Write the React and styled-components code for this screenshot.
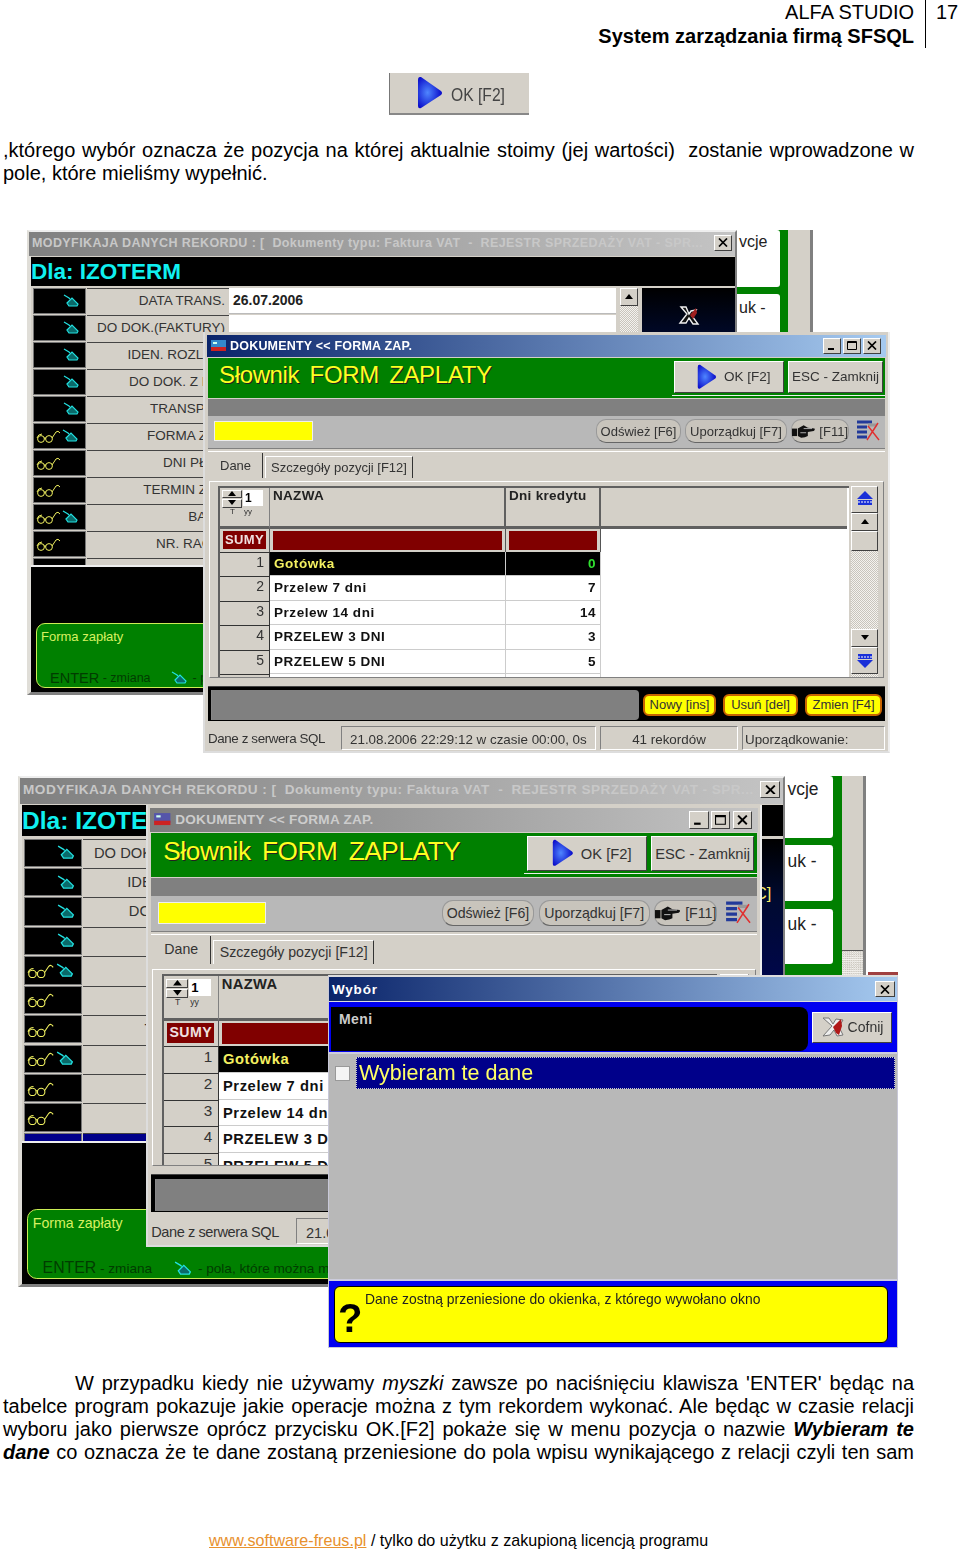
import React from "react";
import styled, { createGlobalStyle, css } from "styled-components";

const GlobalStyle = createGlobalStyle`
  html, body { margin: 0; padding: 0; background: #fff; }
  body { font-family: "Liberation Sans", Arial, sans-serif; color: #000; }
`;

const raised = css`
  border: 1px solid;
  border-color: #fff #404040 #404040 #fff;
  box-sizing: border-box;
`;

const sunken = css`
  border: 1px solid;
  border-color: #808080 #fff #fff #808080;
  box-sizing: border-box;
`;

const dither = css`
  background: repeating-conic-gradient(#c8c4bc 0 25%, #f4f2ee 0 50%) 0 0 / 2px 2px;
`;

const Page = styled.div`
  width: 960px;
  height: 1550px;
  overflow: hidden;
  display: flex;
  flex-direction: column;
`;

const Header = styled.header`
  display: flex;
  justify-content: flex-end;
  height: 48px;
  font-size: 20px;
  line-height: 24px;
`;
const HeaderTitles = styled.div`
  text-align: right;
  padding: 0 11px 0 0;
  border-right: 1px solid #000;
  strong { display: block; }
`;
const PageNumber = styled.div`
  width: 34px;
  padding-left: 10px;
  box-sizing: border-box;
`;

const OkPicture = styled.div`
  margin: 25px 0 0 389px;
  width: 140px;
  height: 42px;
  background: #d4d0c8;
  border-left: 1px solid #777;
  border-bottom: 2px solid #888;
  box-sizing: border-box;
  display: flex;
  align-items: center;
  padding-left: 27px;
  gap: 8px;
  font-size: 18px;
  color: #444;
  filter: blur(0.4px);
  span { display: inline-block; margin-top: 5px; transform: scaleX(0.87); transform-origin: left; }
`;

const Para = styled.p`
  margin: ${(p) => p.$top}px 0 0 3px;
  width: 911px;
  font-size: 20px;
  line-height: 23.3px;
  text-align: justify;
  text-align-last: ${(p) => (p.$fill ? "justify" : "left")};
  text-indent: ${(p) => p.$indent || 0}px;
`;

const Footer = styled.footer`
  margin-top: 65px;
  margin-left: 209px;
  font-size: 16.1px;
  line-height: 20px;
  white-space: nowrap;
  a { color: #e8912d; }
`;

const Shot = styled.div`
  position: relative;
  margin-top: ${(p) => p.$top}px;
  height: ${(p) => p.$height}px;
  flex: none;
  filter: blur(0.4px);
`;

const Placed = styled.div`
  position: absolute;
  left: ${(p) => p.$x / (p.$scale || 1)}px;
  top: ${(p) => p.$y / (p.$scale || 1)}px;
  width: ${(p) => p.$w}px;
  height: ${(p) => p.$h}px;
  zoom: ${(p) => p.$scale || 1};
`;

/* ---------- icons ---------- */

const MouseIcon = () => (
  <svg width="18" height="14" viewBox="0 0 18 14" fill="none" stroke="#22e0e0" strokeWidth="1.2">
    <path d="M1 1l5 3 1 1" />
    <path d="M4 9l5-5 6 6-1 2H6z" fill="#0a6a6a" />
  </svg>
);

const GlassesIcon = () => (
  <svg width="25" height="14" viewBox="0 0 25 14" fill="none" stroke="#f0f060" strokeWidth="1">
    <circle cx="5" cy="10" r="3.4" />
    <circle cx="13" cy="10" r="3.4" />
    <path d="M1 9q1-4 5-4M8 9h2M16 9l4-6q2-2 4 1" />
  </svg>
);

const PlayIcon = ({ size = 34 }) => (
  <svg width={(size * 26) / 34} height={size} viewBox="0 0 26 34">
    <defs>
      <radialGradient id="playFill" cx="0.4" cy="0.5" r="0.6">
        <stop offset="0" stopColor="#4f86ff" />
        <stop offset="1" stopColor="#0808c8" />
      </radialGradient>
    </defs>
    <path d="M3 1Q1 1 1 4V30Q1 33 4 32L24 19Q26 17 24 15L4 1Z" fill="url(#playFill)" />
  </svg>
);

const CloseGlyph = () => (
  <svg width="10" height="9" viewBox="0 0 10 9" stroke="#000" strokeWidth="1.7">
    <path d="M1 0.5l8 8M9 0.5l-8 8" />
  </svg>
);
const MinGlyph = () => (
  <svg width="10" height="9" viewBox="0 0 10 9">
    <rect x="1" y="7" width="6" height="2" fill="#000" />
  </svg>
);
const MaxGlyph = () => (
  <svg width="10" height="9" viewBox="0 0 10 9" fill="none" stroke="#000">
    <path d="M0.5 0.5h9v8h-9zM0.5 1.5h9" />
  </svg>
);

const AppIcon = ({ dim }) => (
  <svg width="17" height="14" viewBox="0 0 17 14">
    <rect x="1" y="1" width="15" height="9" fill={dim ? "#55a" : "#38c"} />
    <rect x="3" y="3" width="4" height="2" fill="#cfe" />
    <rect x="1" y="8" width="15" height="4" fill="#c22" />
  </svg>
);

const HandIcon = () => (
  <svg width="28" height="17" viewBox="0 0 28 17">
    <path d="M0 5h6v9H0z" fill="#111" />
    <path d="M7 5l7-4 5 3 8 1q1 2-1 3l-7 1v5q-3 2-8 2l-4-2z" fill="#111" />
    <path d="M14 5h10M10 10h7" stroke="#ccc" />
  </svg>
);

const ColumnsIcon = () => (
  <svg width="24" height="22" viewBox="0 0 24 22">
    <path d="M1 2h15M1 7h10M1 12h10M1 17h10" stroke="#223a9a" strokeWidth="3" />
    <path d="M12 5h9" stroke="#999" strokeWidth="3" />
    <path d="M11 20L22 3M12 6l11 14" stroke="#e03030" strokeWidth="1.4" fill="none" />
  </svg>
);

const BackIcon = () => (
  <svg width="24" height="21" viewBox="0 0 24 21">
    <path d="M2 1l9 8-9 10 7-1 4-5 3 6 6-1-4-8 4-7-7-1-3 5-4-6z" fill="#eee" stroke="#777" />
    <path d="M12 10l8-8 1 7-3 9-3-2z" fill="#b01818" />
  </svg>
);

const WrongIcon = () => (
  <svg width="24" height="22" viewBox="0 0 24 22" fill="none">
    <path d="M4 2l6 7-7 9h6l3-5 4 6h5l-6-8 4-6-5 1-2 3-3-7z" stroke="#f0f0f0" strokeWidth="1.4" fill="#111" />
    <path d="M13 10l6-7 1 5-4 6z" fill="#a02020" />
  </svg>
);

const Triangle = ({ down }) => (
  <svg width="10" height="6" viewBox="0 0 10 6">
    <path d={down ? "M1 0h8l-4 5z" : "M5 0l4 5H1z"} fill="#000" />
  </svg>
);

const JumpIcon = ({ down }) => (
  <svg width="20" height="18" viewBox="0 0 20 18" style={down ? { transform: "scaleY(-1)" } : undefined}>
    <path d="M10 1l8 8H2z" fill="#1a30d8" />
    <rect x="3" y="10" width="14" height="5" fill="#1a30d8" />
    <path d="M3 12h14" stroke="#fff" strokeDasharray="2 1" />
  </svg>
);

/* ---------- window behind ---------- */

const RecordFrame = styled.div`
  display: flex;
  height: 100%;
`;
const RecordMain = styled.div`
  flex: 1;
  min-width: 0;
  display: flex;
  flex-direction: column;
  background: #d4d0c8;
  border-top: 2px solid #eee;
  border-bottom: 3px solid #808080;
  border-left: 4px solid #e0ded8;
  border-right: 2px solid #808080;
  box-sizing: border-box;
`;
const RecordTitle = styled.div`
  height: 24px;
  flex: none;
  display: flex;
  align-items: center;
  justify-content: space-between;
  padding: 0 3px 2px 3px;
  margin-left: -2px;
  background: linear-gradient(90deg, #808080, #c4c4c4);
  color: #c8c8c8;
  font-size: 12.5px;
  font-weight: bold;
  white-space: pre;
  overflow: hidden;
  letter-spacing: 0.4px;
  margin-bottom: 1px;
  box-sizing: border-box;
`;
const CaptionButton = styled.span`
  ${raised}
  flex: none;
  width: ${(p) => p.$w || 18}px;
  height: 16px;
  background: #d4d0c8;
  display: inline-flex;
  align-items: center;
  justify-content: center;
`;
const ClientBand = styled.div`
  height: 29px;
  flex: none;
  background: #000;
  color: #10f0f0;
  font-size: 22.5px;
  font-weight: bold;
  line-height: 29px;
`;
const RecordBody = styled.div`
  height: 281px;
  flex: none;
  display: flex;
  gap: 4px;
  overflow: hidden;
  padding: 2px 0 0 2px;
  border-bottom: 2px solid #eee;
  box-sizing: border-box;
`;
const FieldList = styled.div`
  flex: 1;
  min-width: 0;
  display: flex;
  flex-direction: column;
  overflow: hidden;
`;
const FieldRow = styled.div`
  display: flex;
  height: 27px;
  flex: none;
  box-sizing: border-box;
  padding-bottom: 1px;
`;
const FieldIcons = styled.div`
  width: 53px;
  flex: none;
  box-sizing: border-box;
  background: ${(p) => (p.$navy ? "#00008a" : "#000")};
  border: 1px solid #777;
  display: flex;
  align-items: center;
  justify-content: ${(p) => (p.$end ? "flex-end" : "flex-start")};
  gap: 1px;
  padding: 0 4px 0 2px;
`;
const FieldLabel = styled.div`
  width: 142px;
  flex: none;
  box-sizing: border-box;
  margin-left: 1px;
  background: ${(p) => (p.$navy ? "#00008a" : "#d4d0c8")};
  color: ${(p) => (p.$navy ? "#ffff60" : "#333")};
  border-top: 1px solid #444;
  text-align: right;
  padding-right: 4px;
  font-size: 13.5px;
  line-height: 24px;
  white-space: nowrap;
  overflow: hidden;
`;
const FieldValue = styled.div`
  flex: 1;
  background: #fff;
  border-bottom: 1px solid #bbb;
  font-size: 14px;
  font-weight: bold;
  line-height: 24px;
  padding-left: 4px;
  color: #222;
`;
const FieldScroll = styled.div`
  width: 18px;
  flex: none;
  ${dither}
`;
const ScrollButton = styled.div`
  ${raised}
  height: 18px;
  background: #d4d0c8;
  display: flex;
  align-items: center;
  justify-content: center;
`;
const SidePanel = styled.div`
  width: 93px;
  flex: none;
  background: linear-gradient(180deg, #000 0%, #000a30 20%, #000080 100%);
  color: #ffee66;
  font-size: 15px;
  display: flex;
  flex-direction: column;
  align-items: center;
  padding-top: 17px;
  box-sizing: border-box;
`;
const PanelHint = styled.span`
  margin-top: 3px;
  align-self: flex-end;
  margin-right: 11px;
`;
const RecordFooter = styled.div`
  flex: 1;
  background: #000;
  padding: 0 6px 4px 5px;
  display: flex;
  align-items: flex-end;
`;
const HintBox = styled.div`
  flex: 1;
  height: 65px;
  box-sizing: border-box;
  background: #008000;
  border: 1px solid #ccee55;
  border-radius: 9px;
  padding: 5px 4px 0;
  display: flex;
  flex-direction: column;
  justify-content: space-between;
  color: #d8f060;
  font-size: 13px;
  white-space: nowrap;
  overflow: hidden;
`;
const HintKeys = styled.div`
  display: flex;
  align-items: center;
  color: #003c00;
  font-size: 12.5px;
  padding-left: 9px;
  margin-bottom: 1px;
  b { font-weight: normal; font-size: 14.5px; }
  svg { margin: 0 4px 0 20px; }
`;

const SideStrip = styled.div`
  width: ${(p) => p.$w}px;
  flex: none;
  display: flex;
  overflow: hidden;
`;
const SideCells = styled.div`
  flex: 1;
  display: flex;
  flex-direction: column;
  background: #008000;
  gap: 7px;
  padding-right: 8px;
  min-width: 0;
`;
const SideCell = styled.div`
  height: 51px;
  flex: none;
  background: #fff;
  border-radius: 0 3px 3px 0;
  font-size: 16px;
  line-height: 24px;
  color: #222;
  padding: 2px 0 0 2px;
  box-sizing: border-box;
  white-space: nowrap;
  &:first-child {
    height: 57px;
    padding-top: 0;
  }
`;
const SideScroll = styled.div`
  width: ${(p) => p.$w}px;
  flex: none;
  ${dither}
  border-right: 3px solid #808080;
  box-sizing: border-box;
`;
const SideThumb = styled.div`
  height: 160px;
  background: #d4d0c8;
  border-bottom: 1px solid #555;
`;

/* ---------- dictionary window ---------- */

const FormFrame = styled.div`
  height: 100%;
  display: flex;
  flex-direction: column;
  box-sizing: border-box;
  background: #d4d0c8;
  padding: 3px 3px 1px;
  border-right: 2px solid #eee;
  border-left: 2px solid #ddd;
  border-bottom: 2px solid #ddd;
`;
const FormTitle = styled.div`
  height: 22px;
  flex: none;
  margin: 0 -1px 1px;
  padding: 0 3px;
  display: flex;
  align-items: center;
  gap: 3px;
  background: ${(p) =>
    p.$active ? "linear-gradient(90deg, #0a246a, #a6caf0)" : "linear-gradient(90deg, #7c7c7c, #c4c4c4)"};
  color: ${(p) => (p.$active ? "#fff" : "#ccc")};
  font-size: 12.5px;
  font-weight: bold;
  letter-spacing: 0.2px;
  white-space: nowrap;
`;
const TitleSpacer = styled.span`
  flex: 1;
`;
const CaptionGroup = styled.span`
  display: inline-flex;
  gap: 2px;
  margin-right: 2px;
`;
const GreenBand = styled.div`
  height: 40px;
  flex: none;
  background: #008000;
  display: flex;
  align-items: flex-start;
`;
const DictTitle = styled.div`
  flex: 1;
  padding: 2px 0 0 11px;
  color: #ffff20;
  font-size: 24px;
  line-height: 30px;
  word-spacing: 4px;
  letter-spacing: -0.35px;
  text-shadow: 1px 1px 0 #222;
  white-space: nowrap;
`;
const BandButtons = styled.div`
  display: flex;
  gap: 4px;
  background: #008000;
  height: 38px;
  padding: 3px 2px 2px;
  box-sizing: border-box;
  border-bottom: 1px solid #eee;
`;
const BandButton = styled.div`
  ${raised}
  width: ${(p) => p.$w}px;
  background: #d4d0c8;
  display: flex;
  align-items: center;
  justify-content: ${(p) => (p.$lead ? "flex-start" : "center")};
  padding-left: ${(p) => p.$lead || 0}px;
  gap: 7px;
  color: #333;
  font-size: 13.5px;
  white-space: nowrap;
`;
const GreyBand = styled.div`
  height: 17px;
  flex: none;
  background: #808080;
  margin-top: 1px;
`;
const FilterBar = styled.div`
  height: 33px;
  flex: none;
  background: #b8b8b8;
  border-bottom: 1px solid #808080;
  box-sizing: border-box;
  display: flex;
  align-items: center;
  gap: 4px;
  padding: 0 5px 1px 6px;
`;
const SearchBox = styled.div`
  width: 99px;
  height: 20px;
  background: #ffff00;
  border: 1px solid #eee;
  box-sizing: border-box;
  margin-right: auto;
`;
const PillButton = styled.div`
  width: ${(p) => p.$w}px;
  height: 24px;
  box-sizing: border-box;
  display: flex;
  align-items: center;
  justify-content: center;
  gap: 4px;
  border: 1px solid #999;
  border-bottom-color: #666;
  border-radius: 10px;
  background: #c8c4bc;
  color: #333;
  font-size: 13px;
  white-space: nowrap;
`;
const ColumnsSlot = styled.span`
  display: inline-flex;
  margin-left: 3px;
`;
const TabsBar = styled.div`
  height: 27px;
  flex: none;
  margin-top: 2px;
  border-top: 1px solid #fff;
  box-sizing: border-box;
  display: flex;
  align-items: flex-end;
  gap: 2px;
  padding-left: 6px;
`;
const Tab = styled.div`
  height: ${(p) => (p.$on ? 25 : 22)}px;
  box-sizing: border-box;
  padding: 0 ${(p) => (p.$on ? 11 : 5)}px 0 ${(p) => (p.$on ? 6 : 5)}px;
  border-right: 1px solid #333;
  border-left: ${(p) => (p.$on ? "0" : "1px solid #fff")};
  border-top: ${(p) => (p.$on ? "0" : "1px solid #fff")};
  font-size: 13px;
  line-height: ${(p) => (p.$on ? 25 : 22)}px;
  color: #333;
  white-space: nowrap;
`;
const GridArea = styled.div`
  flex: 1;
  min-height: 0;
  display: flex;
  gap: 2px;
  margin: ${(p) => p.$top}px 1px 0;
  padding: 4px 5px 0 8px;
  border-top: 1px solid #fff;
  border-bottom: 1px solid #808080;
  border-right: 1px solid #808080;
  border-left: 1px solid #fff;
  box-sizing: border-box;
`;
const GridBody = styled.div`
  flex: 1;
  min-width: 0;
  overflow: hidden;
  background: #fff;
  border-left: 2px solid #606060;
  border-top: 2px solid #606060;
  padding-right: 2px;
  box-sizing: border-box;
`;
const GridRow = styled.div`
  display: grid;
  grid-template-columns: 50px 236px 95px 1fr;
  height: ${(p) => p.$h}px;
  box-sizing: border-box;
`;
const CornerCell = styled.div`
  background: #d4d0c8;
  border-right: 1px solid #808080;
  border-bottom: 3px solid #606060;
  font-size: 12px;
  font-weight: bold;
  padding: 2px 0 0 2px;
  box-sizing: border-box;
`;
const SpinnerRow = styled.div`
  display: flex;
  gap: 1px;
`;
const Spinner = styled.div`
  display: flex;
  flex-direction: column;
  width: 20px;
  height: 18px;
  gap: 1px;
  span {
    flex: 1;
    ${raised}
    background: #d4d0c8;
    display: flex;
    align-items: center;
    justify-content: center;
  }
`;
const SpinnerValue = styled.div`
  width: 20px;
  height: 16px;
  background: #fff;
  line-height: 17px;
  padding-left: 2px;
  box-sizing: border-box;
`;
const SpinnerUnits = styled.div`
  font-size: 8px;
  font-weight: normal;
  line-height: 8px;
  padding-left: 8px;
  word-spacing: 7px;
  color: #333;
`;
const HeadCell = styled.div`
  background: #d4d0c8;
  border-right: 2px solid #606060;
  border-bottom: 3px solid #606060;
  font-size: 13.5px;
  font-weight: bold;
  letter-spacing: 0.3px;
  color: #222;
  padding: 0 3px;
  box-sizing: border-box;
`;
const HeadFill = styled(HeadCell)`
  border-right: 0;
`;
const SumLabel = styled.div`
  background: #d4d0c8;
  padding: 2px 3px 0;
  box-sizing: border-box;
  border-right: 1px solid #555;
  span {
    display: block;
    background: #800000;
    color: #f0e0e0;
    font-size: 13px;
    font-weight: bold;
    letter-spacing: 0.4px;
    line-height: 18px;
    text-align: center;
    white-space: nowrap;
    overflow: hidden;
  }
`;
const SumCell = styled.div`
  background: #d4d0c8;
  border-right: 1px solid #555;
  padding: 2px 3px;
  box-sizing: border-box;
  span {
    display: block;
    height: 100%;
    background: #800000;
  }
`;
const RowNumber = styled.div`
  background: #d4d0c8;
  border-top: 1px solid #333;
  border-right: 1px solid #333;
  text-align: right;
  padding-right: 5px;
  font-size: 14px;
  line-height: 19px;
  color: #333;
  box-sizing: border-box;
`;
const DataCell = styled.div`
  background: ${(p) => (p.$on ? "#000" : "#fff")};
  color: ${(p) => (p.$on ? p.$on : "#111")};
  border-bottom: 1px solid #ccc;
  border-right: 1px solid #ccc;
  font-size: 13.5px;
  font-weight: bold;
  letter-spacing: 0.55px;
  line-height: 24px;
  padding: 0 4px;
  text-align: ${(p) => (p.$num ? "right" : "left")};
  white-space: nowrap;
  overflow: hidden;
  box-sizing: border-box;
`;
const BlankCell = styled.div`
  background: #fff;
`;
const ScrollColumn = styled.div`
  width: 27px;
  flex: none;
  display: flex;
  flex-direction: column;
  padding-bottom: 3px;
  box-sizing: border-box;
  ${dither}
`;
const ScrollJump = styled(ScrollButton)`
  height: 27px;
`;
const ScrollThumb = styled(ScrollButton)`
  height: 20px;
`;
const ScrollGap = styled.div`
  flex: 1;
`;
const ActionBar = styled.div`
  height: 35px;
  flex: none;
  margin-top: 8px;
  padding: 3px 3px 1px;
  background: #000;
  box-sizing: border-box;
  display: flex;
  align-items: center;
  gap: 7px;
  border-top: 1px solid #444;
`;
const MessagePanel = styled.div`
  flex: 1;
  align-self: stretch;
  background: #808080;
  border-radius: 0 4px 4px 0;
  border-left: 1px solid #888;
  margin-right: -3px;
`;
const YellowButton = styled.div`
  width: ${(p) => p.$w}px;
  height: 22px;
  box-sizing: border-box;
  background: #ffff00;
  border: 2px solid #c86400;
  border-radius: 6px;
  text-align: center;
  color: #333;
  font-size: 13px;
  line-height: 17px;
  white-space: nowrap;
`;
const StatusBar = styled.div`
  height: 24px;
  flex: none;
  margin-top: 5px;
  display: flex;
  gap: 4px;
  font-size: 13.4px;
  color: #333;
  line-height: 26px;
  white-space: nowrap;
  overflow: hidden;
`;
const StatusCell = styled.div`
  ${(p) => p.$sunken && sunken}
  flex: ${(p) => (p.$w ? "none" : 1)};
  width: ${(p) => p.$w}px;
  padding: 0 ${(p) => (p.$center ? 0 : 3)}px 0 ${(p) => p.$pad || 0}px;
  text-align: ${(p) => (p.$center ? "center" : "left")};
  letter-spacing: ${(p) => (p.$tight ? "-0.4px" : "normal")};
  overflow: hidden;
`;

/* ---------- choice dialog ---------- */

const Dialog = styled.div`
  height: 100%;
  display: flex;
  flex-direction: column;
  background: #0000f0;
  border: 1px solid #c8c8d8;
  border-top: 2px solid #ddd;
  box-sizing: border-box;
`;
const DialogTitle = styled.div`
  height: 23px;
  flex: none;
  background: linear-gradient(90deg, #0a246a, #a6caf0);
  color: #fff;
  font-size: 13.5px;
  font-weight: bold;
  letter-spacing: 0.8px;
  display: flex;
  align-items: center;
  justify-content: space-between;
  padding: 1px 2px 0 3px;
  border-bottom: 1px solid #ddd;
`;
const DialogTop = styled.div`
  height: 50px;
  flex: none;
  display: flex;
  align-items: flex-start;
  padding-top: 5px;
  box-sizing: border-box;
`;
const MenuTitle = styled.div`
  width: 477px;
  height: 44px;
  margin-left: 2px;
  box-sizing: border-box;
  background: #000;
  border-radius: 0 8px 8px 0;
  color: #ccc;
  font-size: 14px;
  font-weight: bold;
  padding: 4px 8px;
  letter-spacing: 0.4px;
`;
const BackButton = styled.div`
  ${raised}
  width: 80px;
  height: 31px;
  margin: 5px 0 0 4px;
  background: #d4d0c8;
  display: flex;
  align-items: center;
  justify-content: center;
  gap: 3px;
  font-size: 14px;
  color: #333;
`;
const ChoiceList = styled.div`
  flex: 1;
  background: #b8b8b8;
  border-top: 2px solid #ccd;
  border-bottom: 2px solid #ccd;
  padding: 3px 2px 0 6px;
  display: flex;
  align-items: flex-start;
  gap: 6px;
`;
const ChoiceBox = styled.span`
  width: 15px;
  height: 15px;
  flex: none;
  margin-top: 9px;
  background: #f4f4f4;
  border: 1px solid #999;
  box-sizing: border-box;
`;
const ChoiceRow = styled.div`
  flex: 1;
  height: 32px;
  box-sizing: border-box;
  background: #00008a;
  border: 1px dotted #ccc;
  color: #ffff66;
  font-size: 21.5px;
  line-height: 30px;
  padding-left: 2px;
`;
const DialogHint = styled.div`
  height: 66px;
  flex: none;
  padding: 5px 9px 4px 5px;
  box-sizing: border-box;
  display: flex;
`;
const HintYellow = styled.div`
  flex: 1;
  background: #ffff00;
  border: 1px solid #000;
  border-radius: 6px;
  display: flex;
  color: #222;
  font-size: 13.9px;
  line-height: 20px;
  padding: 2px 0 0 3px;
`;
const Question = styled.span`
  font-size: 40px;
  font-weight: bold;
  line-height: 46px;
  color: #000;
  margin-top: 6px;
  width: 27px;
  flex: none;
`;
const BehindEdge = styled.div`
  position: absolute;
  left: 868px;
  top: ${972 - 777}px;
  width: 30px;
  height: 3px;
  background: #a04040;
`;

/* ---------- data ---------- */

const recordRows = [
  { label: "DATA TRANS.", icons: "m", value: "26.07.2006" },
  { label: "DO DOK.(FAKTURY)", icons: "m" },
  { label: "IDEN. ROZLICZ", icons: "m" },
  { label: "DO DOK. Z DNI", icons: "m" },
  { label: "TRANSPOR", icons: "m" },
  { label: "FORMA ZAP", icons: "gm" },
  { label: "DNI PŁAT.", icons: "g" },
  { label: "TERMIN ZAP", icons: "g" },
  { label: "BANK", icons: "gm" },
  { label: "NR. RACH.", icons: "g" },
  { label: "FAKTOR", icons: "g" },
];

const payments = [
  { name: "Gotówka", days: "0" },
  { name: "Przelew 7 dni", days: "7" },
  { name: "Przelew 14 dni", days: "14" },
  { name: "PRZELEW 3 DNI", days: "3" },
  { name: "PRZELEW 5 DNI", days: "5" },
  { name: "", days: "", num: " " },
];

function RecordWindow({ rows, stripWidth, thumbWidth, sideCells, panelHint }) {
  return (
    <RecordFrame>
      <RecordMain>
        <RecordTitle>
          <span>{"MODYFIKAJA DANYCH REKORDU : [  Dokumenty typu: Faktura VAT  -  REJESTR SPRZEDAŻY VAT - SPR..."}</span>
          <CaptionButton>
            <CloseGlyph />
          </CaptionButton>
        </RecordTitle>
        <ClientBand>Dla: IZOTERM</ClientBand>
        <RecordBody>
          <FieldList>
            {rows.map((row) => (
              <FieldRow key={row.label}>
                <FieldIcons $navy={row.navy} $end={row.icons === "m"}>
                  {row.icons?.includes("g") && <GlassesIcon />}
                  {row.icons?.includes("m") && <MouseIcon />}
                </FieldIcons>
                <FieldLabel $navy={row.navy}>{row.label}</FieldLabel>
                <FieldValue>{row.value}</FieldValue>
              </FieldRow>
            ))}
          </FieldList>
          <FieldScroll>
            <ScrollButton>
              <Triangle />
            </ScrollButton>
          </FieldScroll>
          <SidePanel>
            <WrongIcon />
            {panelHint && <PanelHint>C]</PanelHint>}
          </SidePanel>
        </RecordBody>
        <RecordFooter>
          <HintBox>
            <span>Forma zapłaty</span>
            <HintKeys>
              <b>ENTER</b>&nbsp;- zmiana
              <MouseIcon />- pola, które można modyfikować
            </HintKeys>
          </HintBox>
        </RecordFooter>
      </RecordMain>
      <SideStrip $w={stripWidth}>
        <SideCells>
          {sideCells.map((text, i) => (
            <SideCell key={i}>{text}</SideCell>
          ))}
        </SideCells>
        <SideScroll $w={thumbWidth}>
          <SideThumb />
        </SideScroll>
      </SideStrip>
    </RecordFrame>
  );
}

function FormWindow({ active, gridTop }) {
  return (
    <FormFrame>
      <FormTitle $active={active}>
        <AppIcon dim={!active} />
        DOKUMENTY &lt;&lt; FORMA ZAP.
        <TitleSpacer />
        <CaptionGroup>
          <CaptionButton>
            <MinGlyph />
          </CaptionButton>
          <CaptionButton>
            <MaxGlyph />
          </CaptionButton>
          <CaptionButton>
            <CloseGlyph />
          </CaptionButton>
        </CaptionGroup>
      </FormTitle>
      <GreenBand>
        <DictTitle>Słownik FORM ZAPLATY</DictTitle>
        <BandButtons>
          <BandButton $w={110} $lead={22}>
            <PlayIcon size={26} />
            OK [F2]
          </BandButton>
          <BandButton $w={95}>ESC - Zamknij</BandButton>
        </BandButtons>
      </GreenBand>
      <GreyBand />
      <FilterBar>
        <SearchBox />
        <PillButton $w={85}>Odśwież [F6]</PillButton>
        <PillButton $w={102}>Uporządkuj [F7]</PillButton>
        <PillButton $w={58}>
          <HandIcon />
          [F11]
        </PillButton>
        <ColumnsSlot>
          <ColumnsIcon />
        </ColumnsSlot>
      </FilterBar>
      <TabsBar>
        <Tab $on>Dane</Tab>
        <Tab>Szczegóły pozycji [F12]</Tab>
      </TabsBar>
      <GridArea $top={gridTop}>
        <GridBody>
          <GridRow $h={41}>
            <CornerCell>
              <SpinnerRow>
                <Spinner>
                  <span>
                    <Triangle />
                  </span>
                  <span>
                    <Triangle down />
                  </span>
                </Spinner>
                <SpinnerValue>1</SpinnerValue>
              </SpinnerRow>
              <SpinnerUnits>T yy</SpinnerUnits>
            </CornerCell>
            <HeadCell>NAZWA</HeadCell>
            <HeadCell>Dni kredytu</HeadCell>
            <HeadFill />
          </GridRow>
          <GridRow $h={23}>
            <SumLabel>
              <span>SUMY</span>
            </SumLabel>
            <SumCell>
              <span />
            </SumCell>
            <SumCell>
              <span />
            </SumCell>
            <BlankCell />
          </GridRow>
          {payments.map((pay, i) => (
            <GridRow $h={24.5} key={i}>
              <RowNumber>{pay.num || i + 1}</RowNumber>
              <DataCell $on={i === 0 ? "#f4f060" : undefined}>{pay.name}</DataCell>
              <DataCell $num $on={i === 0 ? "#30e030" : undefined}>
                {pay.days}
              </DataCell>
              <BlankCell />
            </GridRow>
          ))}
        </GridBody>
        <ScrollColumn>
          <ScrollJump>
            <JumpIcon />
          </ScrollJump>
          <ScrollButton>
            <Triangle />
          </ScrollButton>
          <ScrollThumb />
          <ScrollGap />
          <ScrollButton>
            <Triangle down />
          </ScrollButton>
          <ScrollJump>
            <JumpIcon down />
          </ScrollJump>
        </ScrollColumn>
      </GridArea>
      <ActionBar>
        <MessagePanel />
        <YellowButton $w={73}>Nowy [ins]</YellowButton>
        <YellowButton $w={75}>Usuń [del]</YellowButton>
        <YellowButton $w={77}>Zmien [F4]</YellowButton>
      </ActionBar>
      <StatusBar>
        <StatusCell $w={126} $tight>
          Dane z serwera SQL
        </StatusCell>
        <StatusCell $w={255} $sunken $pad={8}>
          21.08.2006 22:29:12 w czasie 00:00, 0s
        </StatusCell>
        <StatusCell $w={138} $sunken $center>
          41 rekordów
        </StatusCell>
        <StatusCell $sunken $pad={2}>
          Uporządkowanie:
        </StatusCell>
      </StatusBar>
    </FormFrame>
  );
}

function ChoiceDialog() {
  return (
    <Dialog>
      <DialogTitle>
        Wybór
        <CaptionButton $w={20}>
          <CloseGlyph />
        </CaptionButton>
      </DialogTitle>
      <DialogTop>
        <MenuTitle>Meni</MenuTitle>
        <BackButton>
          <BackIcon />
          Cofnij
        </BackButton>
      </DialogTop>
      <ChoiceList>
        <ChoiceBox />
        <ChoiceRow>Wybieram te dane</ChoiceRow>
      </ChoiceList>
      <DialogHint>
        <HintYellow>
          <Question>?</Question>
          Dane zostną przeniesione do okienka, z którego wywołano okno
        </HintYellow>
      </DialogHint>
    </Dialog>
  );
}

export default function App() {
  const laterRows = [
    ...recordRows.slice(1),
    { label: "KONTRAHENT - ADRES", navy: true },
  ];
  return (
    <Page>
      <GlobalStyle />
      <Header>
        <HeaderTitles>
          ALFA STUDIO
          <strong>System zarządzania firmą SFSQL</strong>
        </HeaderTitles>
        <PageNumber>17</PageNumber>
      </Header>
      <OkPicture>
        <PlayIcon />
        <span>OK [F2]</span>
      </OkPicture>
      <Para $top={24}>
        ,którego wybór oznacza że pozycja na której aktualnie stoimy (jej wartości)&nbsp; zostanie wprowadzone w pole,
        które mieliśmy wypełnić.
      </Para>
      <Shot $top={44} $height={523}>
        <Placed $x={27} $y={0} $w={786} $h={465}>
          <RecordWindow rows={recordRows} stripWidth={76} thumbWidth={25} sideCells={["vcje", "uk -"]} />
        </Placed>
        <Placed $x={203} $y={102} $w={687} $h={421}>
          <FormWindow active gridTop={3} />
        </Placed>
      </Shot>
      <Shot $top={24} $height={571}>
        <Placed $x={18} $y={-1} $w={778} $h={469} $scale={1.09}>
          <RecordWindow
            rows={laterRows}
            stripWidth={74}
            thumbWidth={22}
            panelHint
            sideCells={["vcje", "uk -", "uk -"]}
          />
        </Placed>
        <Placed $x={146} $y={28} $w={565} $h={406} $scale={1.09}>
          <FormWindow gridTop={5} />
        </Placed>
        <BehindEdge />
        <Placed $x={328} $y={198} $w={570} $h={373}>
          <ChoiceDialog />
        </Placed>
      </Shot>
      <Para $top={24} $fill $indent={72}>
        W przypadku kiedy nie używamy <em>myszki</em> zawsze po naciśnięciu klawisza 'ENTER' będąc na tabelce program
        pokazuje jakie operacje można z tym rekordem wykonać. Ale będąc w czasie relacji wyboru jako pierwsze oprócz
        przycisku OK.[F2] pokaże się w menu pozycja o nazwie{" "}
        <b>
          <em>Wybieram te dane</em>
        </b>{" "}
        co oznacza że te dane zostaną przeniesione do pola wpisu wynikającego z relacji czyli ten sam
      </Para>
      <Footer>
        <a href="#top">www.software-freus.pl</a> / tylko do użytku z zakupioną licencją programu
      </Footer>
    </Page>
  );
}
